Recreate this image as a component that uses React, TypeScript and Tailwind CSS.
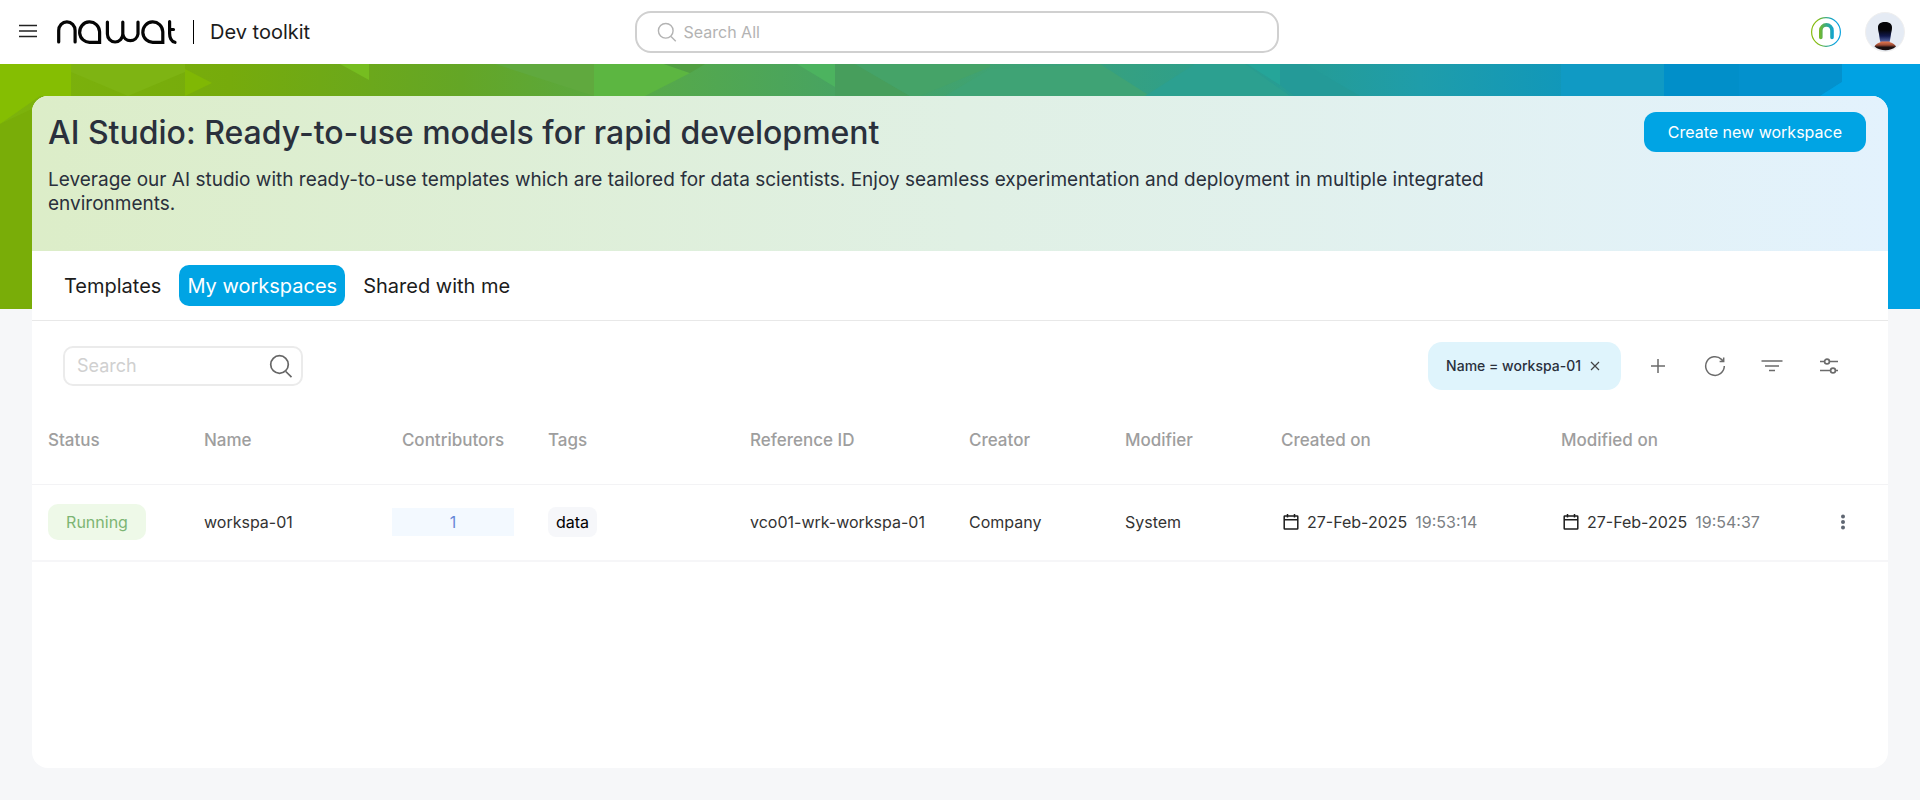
import React from 'react';

function MenuIcon() {
  return (
    <svg width="20" height="24" viewBox="0 0 20 24" fill="none" stroke="#222" strokeWidth="1.700">
      <path d="M1 5.500h18M1 11h18M1 16.500h18" />
    </svg>
  );
}

function Logo() {
  return (
    <svg width="122" height="26" viewBox="0 0 122 26" fill="none" stroke="#050505" strokeWidth="3.200" strokeLinecap="round" role="img" aria-label="nawat">
      <path d="M2.700 23V11.500a8.200 8.700 0 0 1 16.400 0V23" />
      <path d="M43.600 23.300H34.500A10 10.200 0 1 1 43.600 12.800Z" />
      <path d="M51.400 3V15a7.700 8 0 0 0 15.400 0V3M66.800 15a7.700 8 0 0 0 15.200 0V3" />
      <path d="M106.800 23.300H97.500A10 10.200 0 1 1 106.800 12.800Z" />
      <path d="M113.600 2.500V14.500Q113.600 22 119 23.300M113.600 10.500H117.500" />
    </svg>
  );
}

function SearchIcon({ size, color }: { size: number; color: string }) {
  return (
    <svg width={size} height={size} viewBox="0 0 24 24" fill="none" stroke={color} strokeWidth="1.700" aria-hidden="true">
      <circle cx="10.500" cy="10.500" r="8.800" />
      <path d="m16.800 17.500 5.700 5.700" />
    </svg>
  );
}

function BrandBadge() {
  return (
    <svg width="30" height="30" viewBox="0 0 30 30" fill="none" aria-hidden="true">
      <defs>
        <linearGradient id="brand" gradientUnits="userSpaceOnUse" x1="3" y1="15" x2="27" y2="15">
          <stop offset="0.150" stopColor="#86bc10" />
          <stop offset="0.500" stopColor="#3dab80" />
          <stop offset="0.850" stopColor="#0aa2de" />
        </linearGradient>
      </defs>
      <circle cx="15" cy="15" r="14.400" stroke="url(#brand)" strokeWidth="1.200" />
      <path d="M9.800 20.500V13.500a5.600 5.600 0 0 1 11.200 0V20.500" stroke="url(#brand)" strokeWidth="3.600" strokeLinecap="round" />
    </svg>
  );
}

function Avatar() {
  return (
    <svg width="40" height="40" viewBox="0 0 40 40" aria-hidden="true">
      <defs>
        <linearGradient id="head" x1="0" y1="0" x2="0" y2="1">
          <stop offset="0.400" stopColor="#050508" />
          <stop offset="0.700" stopColor="#10184c" />
          <stop offset="1" stopColor="#5a6aa8" />
        </linearGradient>
        <linearGradient id="shoulders" x1="0" y1="0" x2="0" y2="1">
          <stop offset="0" stopColor="#e87a50" />
          <stop offset="0.400" stopColor="#a04c35" />
          <stop offset="0.650" stopColor="#1a0f10" />
        </linearGradient>
      </defs>
      <circle cx="20" cy="20" r="19.500" fill="#e5ebf4" stroke="#efefef" />
      <path d="M13 15.500C13 11.500 16 10 20 10s7 1.500 7 5.500c0 2.500-.5 4-1 6.500-.5 3.500-.8 6-1.500 8h-9c-.8-2-1-4.500-1.500-8-.5-2.500-1-4-1-6.500Z" fill="url(#head)" />
      <path d="M9.500 34.500c2-3.500 5-3.500 7-5h7.500c2 1.500 5 1.500 7 5-3 2.500-6.500 3.800-10.500 3.800S12.500 37 9.500 34.500Z" fill="url(#shoulders)" />
    </svg>
  );
}

function BannerArt() {
  return (
    <svg className="absolute inset-0 h-full w-full" viewBox="0 0 1920 245" preserveAspectRatio="none" aria-hidden="true">
      <defs>
        <linearGradient id="banner" x1="0" y1="0" x2="1" y2="0">
          <stop offset="0" stopColor="#7db30c" />
          <stop offset="0.120" stopColor="#76ab0c" />
          <stop offset="0.240" stopColor="#64a626" />
          <stop offset="0.340" stopColor="#56a94a" />
          <stop offset="0.440" stopColor="#47a362" />
          <stop offset="0.530" stopColor="#3ea276" />
          <stop offset="0.620" stopColor="#2f9f89" />
          <stop offset="0.680" stopColor="#259c96" />
          <stop offset="0.740" stopColor="#1f9daa" />
          <stop offset="0.820" stopColor="#1097bb" />
          <stop offset="0.880" stopColor="#0594c9" />
          <stop offset="1" stopColor="#00a1e2" />
        </linearGradient>
      </defs>
      <rect width="1920" height="245" fill="url(#banner)" />
      <path d="M0 0H71V32H40L0 60Z" fill="#85be02" />
      <path d="M0 60 32 45V245H0Z" fill="#79ad08" />
      <path d="M71 0H185V8L128 32 71 8Z" fill="#7eb413" />
      <path d="M185 5 212 19 185 32Z" fill="#80b804" />
      <path d="M340 0H369V16Z" fill="#76bd20" />
      <path d="M495 0 594 32V0Z" fill="#60a93e" />
      <path d="M594 0H664L690 9 645 32H594Z" fill="#5cb641" />
      <path d="M664 0H705L690 9Z" fill="#519f42" />
      <path d="M797 0H835V23Z" fill="#4cb35f" />
      <path d="M835 0H855L910 32H835Z" fill="#479e5c" />
      <path d="M920 32 990 3V0H855L910 32Z" fill="#45a368" />
      <path d="M945 32 990 5 1100 0 1150 32Z" fill="#3fa375" />
      <path d="M1145 32 1195 0H1245L1290 32Z" fill="#2ca090" />
      <path d="M1247 0H1280V21Z" fill="#25a599" />
      <path d="M1280 0H1305L1360 32H1295L1280 21Z" fill="#249a98" />
      <path d="M1561 0H1664V32H1561Z" fill="#109ac4" />
      <path d="M1664 0H1739V32H1664Z" fill="#018fc9" />
      <path d="M1739 0H1842V18L1820 32H1739Z" fill="#0391cd" />
      <path d="M1842 0H1920V245H1820V32L1842 18Z" fill="#00a2e3" />
    </svg>
  );
}

function CalendarIcon() {
  return (
    <svg width="16" height="18" viewBox="0 0 16 18" fill="none" stroke="#1c1c1c" strokeWidth="1.500" aria-hidden="true">
      <rect x="1.200" y="3" width="13.600" height="13" rx="0.600" />
      <path d="M1.200 6.800h13.600M4.500 1v3.500M11.500 1v3.500" />
    </svg>
  );
}

function Timestamp({ date, time }: { date: string; time: string }) {
  return (
    <div className="flex items-center pl-0.5 whitespace-nowrap">
      <CalendarIcon />
      <span className="ml-2 text-[#333]">{date}</span>
      <span className="ml-2 text-[#7c7f84]">{time}</span>
    </div>
  );
}

const iconButton = 'flex size-6 items-center justify-center';

export default function App() {
  return (
    <div className="flex min-h-screen flex-col bg-[#f6f7f9] font-['Inter',sans-serif] text-[#333]">
      <header className="flex h-16 items-center bg-white pr-[15px] pl-2">
        <div className="flex flex-1 items-center">
          <button type="button" aria-label="Open menu" className="ml-[10px]">
            <MenuIcon />
          </button>
          <a href="#" className="ml-[18px]">
            <Logo />
          </a>
          <span className="ml-[15px] h-6 w-px bg-black" />
          <span className="ml-4 text-xl text-[#1c1c1c]">Dev toolkit</span>
        </div>
        <label className="flex h-[42px] w-[34%] max-w-[644px] items-center rounded-2xl border-2 border-[#d0d0d0] bg-white pl-5">
          <SearchIcon size={20} color="#b3b3b3" />
          <input type="text" aria-label="Search All" placeholder="Search All" className="ml-[7px] min-w-0 flex-1 bg-transparent text-base outline-none placeholder:text-[#b3b3b3]" />
        </label>
        <div className="flex flex-1 items-center justify-end gap-6">
          <button type="button" aria-label="Products">
            <BrandBadge />
          </button>
          <button type="button" aria-label="Account">
            <Avatar />
          </button>
        </div>
      </header>

      <main className="relative flex flex-1 flex-col p-8">
        <div className="absolute inset-x-0 top-0 h-[245px]">
          <BannerArt />
        </div>
        <div className="relative flex flex-1 flex-col overflow-hidden rounded-2xl bg-white">
          <section className="flex items-start justify-between bg-linear-to-r from-[#dcedc8] via-[#e0f0e4] to-[#e3f2fd] pt-4 pr-[22px] pb-[35px] pl-4">
            <div className="max-w-[1480px] pt-px">
              <h1 className="text-[32px] leading-10 font-medium text-[#2a303c]">AI Studio: Ready-to-use models for rapid development</h1>
              <p className="mt-[15px] text-[19px] leading-6 text-[#2a303c]">
                Leverage our AI studio with ready-to-use templates which are tailored for data scientists. Enjoy seamless experimentation and deployment in multiple integrated environments.
              </p>
            </div>
            <button type="button" className="h-10 shrink-0 rounded-xl bg-[#00a4e4] px-6 text-base text-white">
              Create new workspace
            </button>
          </section>

          <nav className="flex h-[70px] items-center gap-[10px] border-b border-[#e8e8e8] px-6 text-xl text-[#1c1c1c]">
            <button type="button" className="h-[41px] px-2">Templates</button>
            <button type="button" className="h-[41px] rounded-[10px] bg-[#00a4e4] px-2 text-white">My workspaces</button>
            <button type="button" className="h-[41px] px-2">Shared with me</button>
          </nav>

          <div className="flex h-[90px] items-center justify-between pr-[47px] pl-[31px]">
            <label className="flex h-10 w-60 items-center rounded-[10px] border-2 border-[#ebebeb] pr-2 pl-3">
              <input type="text" aria-label="Search" placeholder="Search" className="min-w-0 flex-1 bg-transparent text-lg outline-none placeholder:text-[#d0d0d0]" />
              <SearchIcon size={24} color="#666" />
            </label>
            <div className="flex items-center gap-[33px] text-[#6b6b6b]">
              <span className="-mr-2 flex h-12 items-center rounded-[14px] bg-[#dff4fc] px-[18px] text-sm font-medium text-[#2a303c]">
                Name = workspa-01
                <button type="button" aria-label="Remove filter" className="ml-1.5 flex size-4 items-center justify-center">
                  <svg width="10" height="10" viewBox="0 0 10 10" stroke="#444" strokeWidth="1.200">
                    <path d="m1 1 8 8M9 1 1 9" />
                  </svg>
                </button>
              </span>
              <button type="button" aria-label="Add filter" className={iconButton}>
                <svg width="16" height="16" viewBox="0 0 16 16" stroke="currentColor" strokeWidth="1.500">
                  <path d="M8 1v14M1 8h14" />
                </svg>
              </button>
              <button type="button" aria-label="Refresh" className={iconButton}>
                <svg width="22" height="22" viewBox="0 0 22 22" fill="none" stroke="currentColor" strokeWidth="1.500">
                  <path d="M20.300 11A9.300 9.300 0 1 1 17.500 4.400L19.500 6.500M19.700 2.500V6.600H15.600" />
                </svg>
              </button>
              <button type="button" aria-label="Filter" className={iconButton}>
                <svg width="22" height="14" viewBox="0 0 22 14" stroke="currentColor" strokeWidth="1.600">
                  <path d="M.500 2h21M4 7h14M8 11.500h6" />
                </svg>
              </button>
              <button type="button" aria-label="Table settings" className={iconButton}>
                <svg width="20" height="18" viewBox="0 0 20 18" fill="none" stroke="currentColor" strokeWidth="1.700">
                  <path d="M1 4.500h4.500M10.500 4.500H19M1 13.500h10.500M16.500 13.500H19" />
                  <circle cx="8" cy="4.500" r="2.400" />
                  <circle cx="14" cy="13.500" r="2.400" />
                </svg>
              </button>
            </div>
          </div>

          <table className="w-full table-fixed border-collapse text-left text-base">
            <colgroup>
              <col className="w-[156px]" />
              <col className="w-[188px]" />
              <col className="w-[154px]" />
              <col className="w-[204px]" />
              <col className="w-[219px]" />
              <col className="w-[156px]" />
              <col className="w-[156px]" />
              <col className="w-[280px]" />
              <col className="w-[280px]" />
              <col className="w-[63px]" />
            </colgroup>
            <thead>
              <tr className="h-[73px] border-b border-[#f3f3f5] text-[17px] text-[#9e9e9e] *:px-4 *:pt-0 *:pb-[14px] *:font-medium">
                <th>Status</th>
                <th>Name</th>
                <th className="text-center">Contributors</th>
                <th className="indent-0.5">Tags</th>
                <th>Reference ID</th>
                <th>Creator</th>
                <th>Modifier</th>
                <th>Created on</th>
                <th>Modified on</th>
                <th aria-label="Actions" />
              </tr>
            </thead>
            <tbody>
              <tr className="h-[77px] border-b-2 border-[#f6f6f8] *:px-4">
                <td>
                  <span className="flex h-9 w-[98px] items-center justify-center rounded-[10px] bg-[#eef9e8] text-[#7db573]">Running</span>
                </td>
                <td>workspa-01</td>
                <td>
                  <a href="#" className="flex h-7 items-center justify-center bg-[#f3f9ff] text-[#6788d8]">1</a>
                </td>
                <td>
                  <span className="ml-0.5 inline-flex h-[30px] items-center rounded-lg bg-[#f6f7fa] px-2 text-black">data</span>
                </td>
                <td>vco01-wrk-workspa-01</td>
                <td>Company</td>
                <td>System</td>
                <td><Timestamp date="27-Feb-2025" time="19:53:14" /></td>
                <td><Timestamp date="27-Feb-2025" time="19:54:37" /></td>
                <td>
                  <button type="button" aria-label="Row actions" className="flex">
                    <svg width="4" height="18" viewBox="0 0 4 18" fill="#5f6672">
                      <circle cx="2" cy="3.500" r="2" />
                      <circle cx="2" cy="9" r="2" />
                      <circle cx="2" cy="14.500" r="2" />
                    </svg>
                  </button>
                </td>
              </tr>
            </tbody>
          </table>
        </div>
      </main>
    </div>
  );
}
